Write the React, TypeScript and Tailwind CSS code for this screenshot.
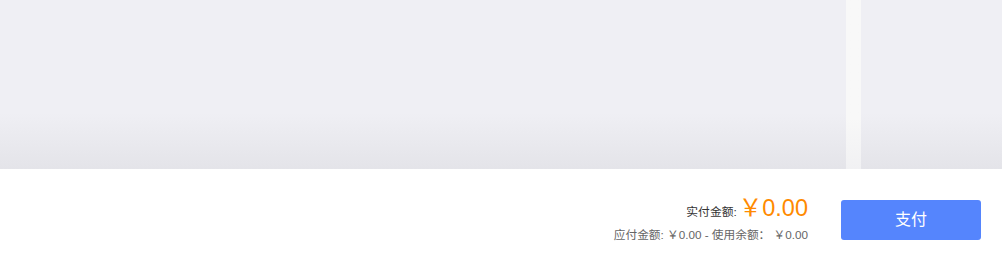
import React from 'react';

const font = { fontFamily: '"Liberation Sans", "Noto Sans CJK SC", sans-serif' };

export default function App() {
  const payable = '0.00';
  const balance = '0.00';
  const actual = '0.00';

  return (
    <div className="w-[1002px] h-[258px] flex flex-col bg-white" style={font}>
      {/* Content panels */}
      <div className="h-[169px] flex">
        <div className="w-[846px] h-full flex flex-col bg-[#efeff4]">
          <div className="flex-1" />
          <div className="h-[56px] bg-gradient-to-b from-[#efeff4] to-[#e4e4e9]" />
        </div>
        <div className="w-[15px] h-full bg-gradient-to-b from-[#f8f8f8] from-70% to-[#f1f1f3]" />
        <div className="flex-1 h-full flex flex-col bg-[#efeff4]">
          <div className="flex-1" />
          <div className="h-[56px] bg-gradient-to-b from-[#efeff4] to-[#e4e4e9]" />
        </div>
      </div>

      {/* Footer */}
      <div className="flex-1 flex items-start justify-end pr-[21px] pt-[31px]">
        <div className="flex flex-col items-end mr-[33px] -mt-[8px]">
          <div className="flex items-baseline">
            <span className="text-[11.8px] text-[#333]">实付金额:</span>
            <span className="ml-[2px] text-[23.5px] leading-[32px] text-[#ff8a00]">￥{actual}</span>
          </div>
          <div className="text-[11.7px] text-[#666] leading-[16px] mt-[3px]">
            应付金额: ￥{payable} - 使用余额： ￥{balance}
          </div>
        </div>
        <button
          type="button"
          className="w-[140px] h-[40px] rounded-[3px] bg-[#5585fd] text-white text-[16px]"
        >
          支付
        </button>
      </div>
    </div>
  );
}
